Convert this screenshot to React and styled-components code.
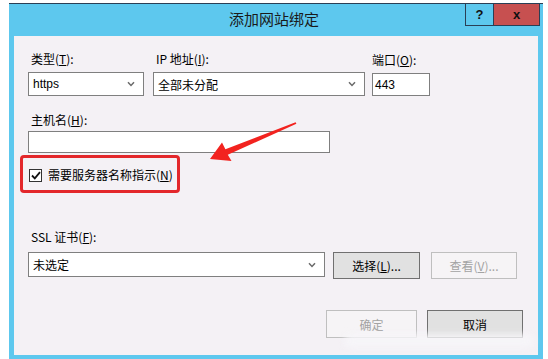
import React from "react";
import styled, { createGlobalStyle } from "styled-components";

const Global = createGlobalStyle`
  html, body { margin: 0; padding: 0; background: #ffffff; }
  body { font-family: "Noto Sans CJK SC", "Noto Sans", sans-serif; }
`;

const Page = styled.div`
  width: 548px;
  height: 359px;
  padding: 3px 0 0 9px;
  box-sizing: border-box;
  overflow: hidden;
`;

const Window = styled.div`
  width: 534px;
  height: 356px;
  background: #5dc8ee;
  border-top: 1px solid #2a3f55;
  box-sizing: border-box;
  display: flex;
  flex-direction: column;
`;

const TitleBar = styled.div`
  height: 32px;
  display: grid;
  grid-template-columns: 1fr auto 1fr;
  align-items: start;
`;

const Title = styled.div`
  grid-column: 2;
  font-size: 15px;
  line-height: 28px;
  color: #1a1a1a;
  padding-top: 1px;
  margin-left: -4px;
`;

const Controls = styled.div`
  grid-column: 3;
  justify-self: end;
  display: flex;
  margin-right: 3px;
  border: 1px solid #2a3f55;
  border-top: none;
`;

const CtlButton = styled.div`
  width: ${(p) => p.$w}px;
  height: 21px;
  background: ${(p) => p.$bg};
  display: flex;
  align-items: center;
  justify-content: center;
  font-family: "Liberation Sans", Arial, sans-serif;
  font-weight: bold;
  font-size: 13px;
  color: #111;
  & + & { border-left: 1px solid #2a3f55; }
`;

const Content = styled.div`
  flex: 1;
  margin: 0 5px 4px 5px;
  background: #f4f1f5;
  position: relative;
  padding: 0 0 0 14px;
  display: flex;
  flex-direction: column;
  font-size: 12px;
  color: #000;
`;

const Row = styled.div`
  display: flex;
  align-items: ${(p) => p.$align || "flex-end"};
  gap: ${(p) => p.$gap || 0}px;
  margin-top: ${(p) => p.$mt || 0}px;
`;

const Field = styled.div`
  display: flex;
  flex-direction: column;
  gap: ${(p) => p.$gap ?? 6}px;
`;

const Label = styled.div`
  padding-left: 3px;
  line-height: 14px;
  height: 14px;
  white-space: nowrap;
`;

const Box = styled.div`
  width: ${(p) => p.$w}px;
  height: ${(p) => p.$h}px;
  box-sizing: border-box;
  border: 1px solid #7f7f7f;
  background: #fff;
  display: flex;
  align-items: center;
  justify-content: space-between;
  padding: 0 8px 0 ${(p) => p.$pl ?? 4}px;
  font-size: 12px;
  font-family: ${(p) => (p.$latin ? '"Liberation Sans", Arial, sans-serif' : "inherit")};
`;

const Check = styled.div`
  width: 13px;
  height: 13px;
  box-sizing: border-box;
  border: 1px solid #333;
  background: #fff;
  display: flex;
  align-items: center;
  justify-content: center;
`;

const CheckRow = styled.div`
  display: flex;
  align-items: center;
  gap: 6px;
  margin-top: 15px;
  padding-left: 1px;
  line-height: 14px;
`;

const Btn = styled.div`
  width: ${(p) => p.$w}px;
  height: ${(p) => p.$h || 27}px;
  box-sizing: border-box;
  border: 1px solid ${(p) => (p.$disabled ? "#bfbfbf" : "#707070")};
  background: ${(p) => (p.$disabled ? "#f6f4f6" : "#e1e1e1")};
  color: ${(p) => (p.$disabled ? "#a3a3a3" : "#000")};
  display: flex;
  align-items: center;
  justify-content: center;
  font-size: 12px;
`;

const Footer = styled.div`
  display: flex;
  justify-content: flex-end;
  gap: 10px;
  margin-top: 33px;
  padding-right: 15px;
`;

const Highlight = styled.div`
  position: absolute;
  left: 6px;
  top: 119px;
  width: 160px;
  height: 38px;
  box-sizing: border-box;
  border: 3px solid #e3272b;
  border-radius: 4px;
`;

const ArrowSvg = styled.svg`
  position: absolute;
  left: 0;
  top: 0;
  width: 524px;
  height: 319px;
  pointer-events: none;
`;

const Smear = styled.div`
  position: absolute;
  left: 330px;
  top: 298px;
  width: 190px;
  height: 14px;
  background: rgba(246, 245, 248, 0.92);
  filter: blur(3px);
  border-radius: 8px;
`;

const Chevron = () => (
  <svg width="8" height="6" viewBox="0 0 8 6">
    <path d="M1 1.2 L4 4.4 L7 1.2" fill="none" stroke="#6a6a6a" strokeWidth="1.5" />
  </svg>
);

const Acc = ({ children }) => (
  <>
    (<u>{children}</u>)
  </>
);

export default function App() {
  return (
    <>
      <Global />
      <Page>
        <Window>
          <TitleBar>
            <Title>添加网站绑定</Title>
            <Controls>
              <CtlButton $w={27} $bg="#5dc8ee">?</CtlButton>
              <CtlButton $w={45} $bg="#c75050">x</CtlButton>
            </Controls>
          </TitleBar>
          <Content>
            <Row $gap={9} $mt={16}>
              <Field>
                <Label>类型<Acc>T</Acc>:</Label>
                <Box $w={116} $h={24} $latin>
                  <span>https</span>
                  <Chevron />
                </Box>
              </Field>
              <Field>
                <Label>IP 地址<Acc>I</Acc>:</Label>
                <Box $w={212} $h={24}>
                  <span>全部未分配</span>
                  <Chevron />
                </Box>
              </Field>
              <Field style={{ marginLeft: -2 }}>
                <Label style={{ paddingLeft: 0 }}>端口<Acc>O</Acc>:</Label>
                <Box $w={58} $h={23} $pl={2} $latin>
                  <span>443</span>
                </Box>
              </Field>
            </Row>
            <Row $mt={17}>
              <Field $gap={4}>
                <Label>主机名<Acc>H</Acc>:</Label>
                <Box $w={302} $h={22} />
              </Field>
            </Row>
            <CheckRow>
              <Check>
                <svg width="10" height="9" viewBox="0 0 10 9">
                  <path d="M1 4.5 L3.8 7.4 L9 1.2" fill="none" stroke="#111" strokeWidth="1.8" />
                </svg>
              </Check>
              <span>需要服务器名称指示<Acc>N</Acc></span>
            </CheckRow>
            <Row $gap={8} $mt={48}>
              <Field $gap={8}>
                <Label>SSL 证书<Acc>F</Acc>:</Label>
                <Box $w={297} $h={25}>
                  <span>未选定</span>
                  <Chevron />
                </Box>
              </Field>
              <Btn $w={87} style={{ marginBottom: -2 }}>选择<Acc>L</Acc>...</Btn>
              <Btn $w={86} $disabled style={{ marginLeft: 3, marginBottom: -2 }}>查看<Acc>V</Acc>...</Btn>
            </Row>
            <Footer>
              <Btn $w={91} $h={28} $disabled>确定</Btn>
              <Btn $w={96} $h={28}>取消</Btn>
            </Footer>
            <Highlight />
            <ArrowSvg viewBox="0 0 524 319">
              <polygon
                points="281.6,86.3 211.4,113.2 208,106.5 196,123 217.5,125 213.8,118.8 282.4,87.7"
                fill="#f2231f"
              />
            </ArrowSvg>
            <Smear />
          </Content>
        </Window>
      </Page>
    </>
  );
}
